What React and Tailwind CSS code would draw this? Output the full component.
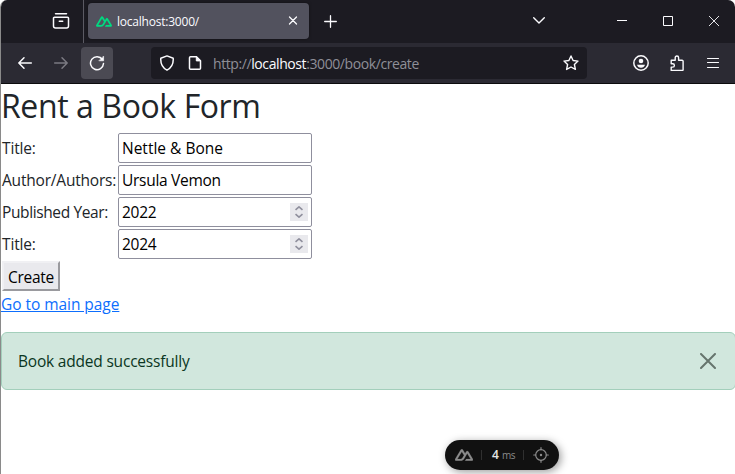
import React from "react";

const stroke = {
  fill: "none",
  stroke: "currentColor",
  strokeLinecap: "round",
  strokeLinejoin: "round",
};

function NuxtMark({ className }) {
  return (
    <svg className={className} viewBox="0 4 24 16" fill="currentColor" stroke="currentColor" strokeWidth=".25">
      <path d="M13.464 19.830h8.922c.283 0 .562-.073.807-.21a1.600 1.600 0 0 0 .591-.574 1.530 1.530 0 0 0 .216-.783 1.530 1.530 0 0 0-.217-.782L17.792 7.414a1.600 1.600 0 0 0-.591-.573 1.650 1.650 0 0 0-.807-.21c-.283 0-.562.073-.807.21a1.600 1.600 0 0 0-.59.573L13.463 9.990 10.470 4.953a1.600 1.600 0 0 0-.591-.573 1.650 1.650 0 0 0-.807-.21c-.284 0-.562.073-.807.21a1.600 1.600 0 0 0-.591.573L.216 17.481a1.530 1.530 0 0 0-.217.782c0 .275.074.545.216.783a1.600 1.600 0 0 0 .59.574c.246.137.525.21.808.21h5.600c2.220 0 3.856-.946 4.982-2.790l2.733-4.593 1.464-2.457 4.395 7.382h-5.859Zm-6.341-2.460-3.908-.002 5.858-9.842 2.923 4.921-1.957 3.290c-.748 1.196-1.597 1.632-2.916 1.632" />
    </svg>
  );
}

function TabBar() {
  return (
    <div className="flex h-[43px] bg-[#1c1b22] text-[#fbfbfe]">
      <div className="flex w-[83px] border-r border-[#5b5a63] pl-[51px] pt-[12px]">
        <svg className="size-[18px]" viewBox="0 0 18 18" {...stroke} strokeWidth="1.5">
          <path d="M3.500 1.700h11M2.500 5.200h13a1 1 0 0 1 1 1V14a2 2 0 0 1-2 2h-11a2 2 0 0 1-2-2V6.200a1 1 0 0 1 1-1zM7.300 9.200h3.400" />
        </svg>
      </div>
      <div className="ml-1 mt-[3px] flex h-9 w-[221px] items-center rounded bg-[#52525e] pl-2 pr-[11px] shadow-[0_0_3px_rgba(0,0,0,0.5)]">
        <NuxtMark className="h-[11px] w-4 text-[#00dc82]" />
        <span className="ml-[5px] flex-1 pt-px text-[12px] leading-4 tracking-[-0.22px]">localhost:3000/</span>
        <svg className="size-[10px]" viewBox="0 0 10 10" {...stroke} strokeWidth="1.3">
          <path d="M1.500 1l7 7M8.500 1l-7 7" />
        </svg>
      </div>
      <svg className="ml-[15px] mt-[15px] size-[13px]" viewBox="0 0 13 13" {...stroke} strokeWidth="1.300">
        <path d="M6.500.7v11.600M.7 6.500h11.600" />
      </svg>
      <div className="flex flex-1 justify-end pr-[16px]">
        <svg className="mr-[71px] mt-[16px] h-[9px] w-[14px]" viewBox="0 0 14 9" {...stroke} strokeWidth="1.4">
          <path d="M1.700 1.700L7 7l5.300-5.300" />
        </svg>
        <svg className="mr-[36px] mt-[16px] h-[9px] w-[10px]" viewBox="0 0 10 9" {...stroke} strokeWidth="1">
          <path d="M0 4.500h10" />
        </svg>
        <svg className="mr-[36px] mt-[16px] size-[10px]" viewBox="0 0 10 10" fill="none" stroke="currentColor">
          <path d="M.5.5h9v9h-9z" />
        </svg>
        <svg className="mt-[16px] size-[10px]" viewBox="0 0 10 10" fill="none" stroke="currentColor" strokeWidth=".9">
          <path d="M0 0l10 10M10 0L0 10" />
        </svg>
      </div>
    </div>
  );
}

function ToolBar() {
  return (
    <div className="flex h-[41px] items-start border-b border-[#0c0c0d] bg-[#2b2a33] pt-1 text-[#fbfbfe]">
      <svg className="ml-[16px] mt-2 size-4" viewBox="0 0 16 16" {...stroke} strokeWidth="1.500">
        <path d="M14.300 8H1.800M7 2.800L1.800 8 7 13.200" />
      </svg>
      <svg className="ml-[20px] mt-2 size-4 text-[#7b7a82]" viewBox="0 0 16 16" {...stroke} strokeWidth="1.500">
        <path d="M1.700 8h12.500M9 2.800L14.200 8 9 13.200" />
      </svg>
      <div className="ml-[12px] flex size-8 items-center justify-center rounded bg-[#4b4a53]">
        <svg className="size-4" viewBox="0 0 16 16" {...stroke} strokeWidth="1.500">
          <path d="M13.400 4.500A6.500 6.500 0 1 0 14.500 8.500" />
          <path d="M14.600 1.400v4.400h-4.400z" fill="currentColor" strokeWidth=".6" />
        </svg>
      </div>
      <div className="ml-[38px] flex h-8 w-[436px] items-center rounded bg-[#1c1b22] pl-2 pr-2">
        <svg className="size-4" viewBox="0 0 16 16" {...stroke} strokeWidth="1.500">
          <path d="M8 .9l6.200 2.300c.4 5.500-1.700 9.700-6.200 12-4.500-2.300-6.600-6.500-6.200-12z" />
        </svg>
        <svg className="ml-[12px] size-4" viewBox="0 0 16 16" {...stroke} strokeWidth="1.500">
          <path d="M3.500 1.700h6l4 4v7.600a1 1 0 0 1-1 1h-9a1 1 0 0 1-1-1V2.700a1 1 0 0 1 1-1z" />
          <path d="M9.300 1.700v4.200h4.200z" fill="currentColor" strokeWidth="1" />
        </svg>
        <span className="ml-[10px] flex-1 pt-[2px] text-[14px] leading-5 tracking-[-0.41px] text-[#8f8f98]">
          http://<span className="text-[#fbfbfe]">localhost</span>:3000/book/create
        </span>
        <svg className="size-4" viewBox="0 0 16 16" {...stroke} strokeWidth="1.400">
          <path d="M8 1l2.100 4.500 4.900.6-3.600 3.400 1 4.900L8 12l-4.400 2.400 1-4.900L1 6.100l4.900-.6z" />
        </svg>
      </div>
      <svg className="ml-[46px] mt-2 size-4" viewBox="0 0 16 16" {...stroke} strokeWidth="1.500">
        <circle cx="8" cy="8" r="7.200" />
        <circle cx="8" cy="6" r="2.300" fill="currentColor" stroke="none" />
        <path d="M4 9.700h8q-.8 3-4 3t-4-3z" fill="currentColor" stroke="none" />
      </svg>
      <svg className="ml-[20px] mt-2 size-4" viewBox="0 0 16 16" {...stroke} strokeWidth="1.400">
        <path d="M2.200 5.200h4V2.700a1.700 1.700 0 0 1 3.400 0v2.500h3.500a1 1 0 0 1 1 1v8.600a.6.6 0 0 1-.6.600H2.200v-3.300h1.500a1.700 1.700 0 0 0 0-3.400H2.200z" />
      </svg>
      <svg className="ml-[20px] mt-2 size-4" viewBox="0 0 16 16" {...stroke} strokeWidth="1.200">
        <path d="M2.500 3.500h11M2.500 7.500h11M2.500 12.500h11" />
      </svg>
    </div>
  );
}

function Field({ label, value, number, labelClass, valueClass }) {
  return (
    <div className="mb-[2px] flex h-[30px] items-center">
      <span className={"w-[117px] shrink-0 whitespace-nowrap pl-px text-[15.5px] leading-6 " + labelClass}>
        {label}
      </span>
      <div className="flex h-[30px] w-[194px] items-center justify-between rounded-[2px] border border-[#8f8f9d] pl-[3px] pr-[3px] text-[15.5px] leading-6 text-black">
        <span className={valueClass}>{value}</span>
        {number && (
          <div className="flex h-[18px] w-[18px] items-center justify-center bg-[#e9e9ed] text-[#8f8f9d]">
            <svg className="h-[14px] w-2" viewBox="0 0 8 14" {...stroke} strokeLinecap="butt" strokeWidth="1.600">
              <path d="M.5 4.900L4 1.800l3.500 3.100M.5 9.100L4 12.200l3.500-3.100" />
            </svg>
          </div>
        )}
      </div>
    </div>
  );
}

export default function App() {
  return (
    <div className="relative h-[474px] w-[735px] overflow-hidden bg-white font-['Open_Sans','Noto_Sans',sans-serif]">
      <div className="flex h-full flex-col overflow-hidden rounded-t-[7px] border-l border-[#8a8a8a]">
        <TabBar />
        <ToolBar />
        <main className="flex w-[735px] flex-col items-start text-[#212529]">
          <h1 className="mb-[8px] mt-[2px] h-[39px] whitespace-nowrap text-[32px] leading-[39px] tracking-[-0.4px]">
            Rent a Book Form
          </h1>
          <Field label="Title:" value="Nettle & Bone" labelClass="tracking-[-0.15px]" valueClass="" />
          <Field label="Author/Authors:" value="Ursula Vemon" labelClass="tracking-[-0.2px]" valueClass="tracking-[-0.28px]" />
          <Field label="Published Year:" value="2022" number labelClass="tracking-[-0.38px]" valueClass="tracking-[-0.25px]" />
          <Field label="Title:" value="2024" number labelClass="tracking-[-0.15px]" valueClass="tracking-[-0.25px]" />
          <button className="ml-px h-[30px] w-[58px] whitespace-nowrap border-2 border-b-[#9a9a9e] border-l-[#f0f0f3] border-r-[#9a9a9e] border-t-[#f0f0f3] bg-[#e9e9ed] pt-[2px] text-[15.5px] leading-6 tracking-[-0.25px] text-black">
            Create
          </button>
          <a className="mt-px text-[15.5px] leading-6 tracking-[-0.05px] text-[#0d6efd] underline">Go to main page</a>
          <div className="mt-[16px] flex h-[58px] w-full items-center justify-between rounded-[6px] border border-[#a3cfbb] bg-[#d1e7dd] pl-4 pr-[19px] text-[15.5px] leading-6 tracking-[-0.2px] text-[#0a3622]">
            <span>Book added successfully</span>
            <svg className="size-4 text-[#66756d]" viewBox="0 0 16 16" {...stroke} strokeWidth="2">
              <path d="M1 1l14 14M15 1L1 15" />
            </svg>
          </div>
        </main>
      </div>
      <div className="absolute left-[445px] top-[440px] flex h-[30px] w-[114px] items-center rounded-full bg-[#111] pl-[10px] pr-[10px] text-[#8b8b8b] shadow-[2px_2px_8px_rgba(0,0,0,0.4)]">
        <NuxtMark className="h-[12px] w-[18px]" />
        <span className="ml-[8px] h-[10px] w-px bg-[#303030]" />
        <span className="ml-[10px] text-[12px] font-semibold leading-4 text-[#e5e5e5]">4</span>
        <span className="ml-[3px] text-[10px] leading-4 tracking-[-0.3px]">ms</span>
        <span className="ml-auto h-[10px] w-px bg-[#303030]" />
        <svg className="ml-[9px] size-4" viewBox="0 0 16 16" {...stroke} strokeWidth="1.200">
          <circle cx="8" cy="8" r="5.300" />
          <circle cx="8" cy="8" r=".6" fill="currentColor" />
          <path d="M8 .7v2M8 13.300v2M.7 8h2M13.300 8h2" />
        </svg>
      </div>
    </div>
  );
}
